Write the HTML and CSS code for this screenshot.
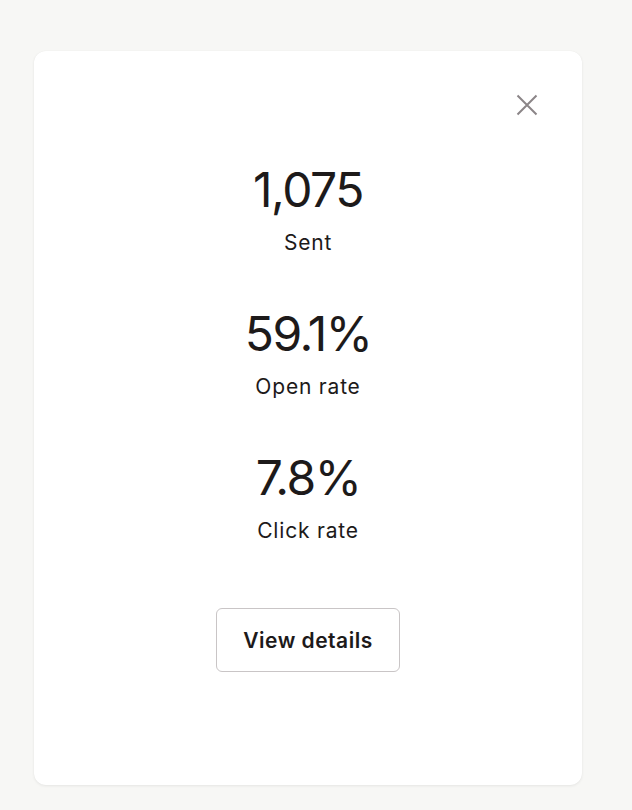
FILE: index.html
```html
<!DOCTYPE html>
<html lang="en">
<head>
<meta charset="utf-8">
<title>Campaign stats</title>
<link rel="stylesheet" href="styles.css">
</head>
<body>
<div class="page">
  <section class="card">
    <div class="card-header">
      <button class="close" aria-label="Close">
        <svg width="22" height="22" viewBox="0 0 22 22" fill="none" stroke="currentColor" stroke-width="2" stroke-linecap="butt">
          <path d="M1.5 1.5 L20.5 20.5 M20.5 1.5 L1.5 20.5"/>
        </svg>
      </button>
    </div>
    <div class="stats">
      <div class="stat">
        <div class="stat-value">1,075</div>
        <div class="stat-label">Sent</div>
      </div>
      <div class="stat">
        <div class="stat-value">59.1%</div>
        <div class="stat-label">Open rate</div>
      </div>
      <div class="stat">
        <div class="stat-value">7.8%</div>
        <div class="stat-label">Click rate</div>
      </div>
    </div>
    <div class="actions">
      <button class="btn">View details</button>
    </div>
  </section>
</div>
</body>
</html>
```
FILE: styles.css
```css
* { box-sizing: border-box; }
html, body { margin: 0; padding: 0; }
body {
  background: #f7f7f5;
  font-family: Inter, "Noto Sans", sans-serif;
  color: #1d1a1a;
}
.page {
  padding: 51px 50px 24px 34px;
}
.card {
  width: 548px;
  height: 734px;
  background: #ffffff;
  border-radius: 12px;
  box-shadow: 0 1px 3px rgba(0, 0, 0, 0.07), 0 0 1px rgba(0, 0, 0, 0.05);
  display: flex;
  flex-direction: column;
  align-items: center;
}
.card-header {
  align-self: stretch;
  display: flex;
  justify-content: flex-end;
  padding: 43px 44px 0 0;
}
.close {
  width: 22px;
  height: 22px;
  padding: 0;
  border: 0;
  background: none;
  color: #8b8587;
  display: flex;
  cursor: pointer;
}
.stats {
  display: flex;
  flex-direction: column;
  gap: 49px;
  margin-top: 46px;
}
.stat {
  display: flex;
  flex-direction: column;
  align-items: center;
  gap: 11px;
}
.stat-value {
  font-size: 48px;
  line-height: 56px;
  font-weight: 400;
  letter-spacing: -1.5px;
}
.stat-label {
  font-size: 21px;
  line-height: 28px;
  font-weight: 400;
  letter-spacing: 0.8px;
}
.actions {
  margin-top: 63px;
}
.btn {
  width: 184px;
  height: 64px;
  border: 1px solid #c9c5c6;
  border-radius: 6px;
  background: #fff;
  font-family: inherit;
  font-size: 21px;
  font-weight: 600;
  letter-spacing: 0.5px;
  color: #1d1a1a;
  cursor: pointer;
}
```
